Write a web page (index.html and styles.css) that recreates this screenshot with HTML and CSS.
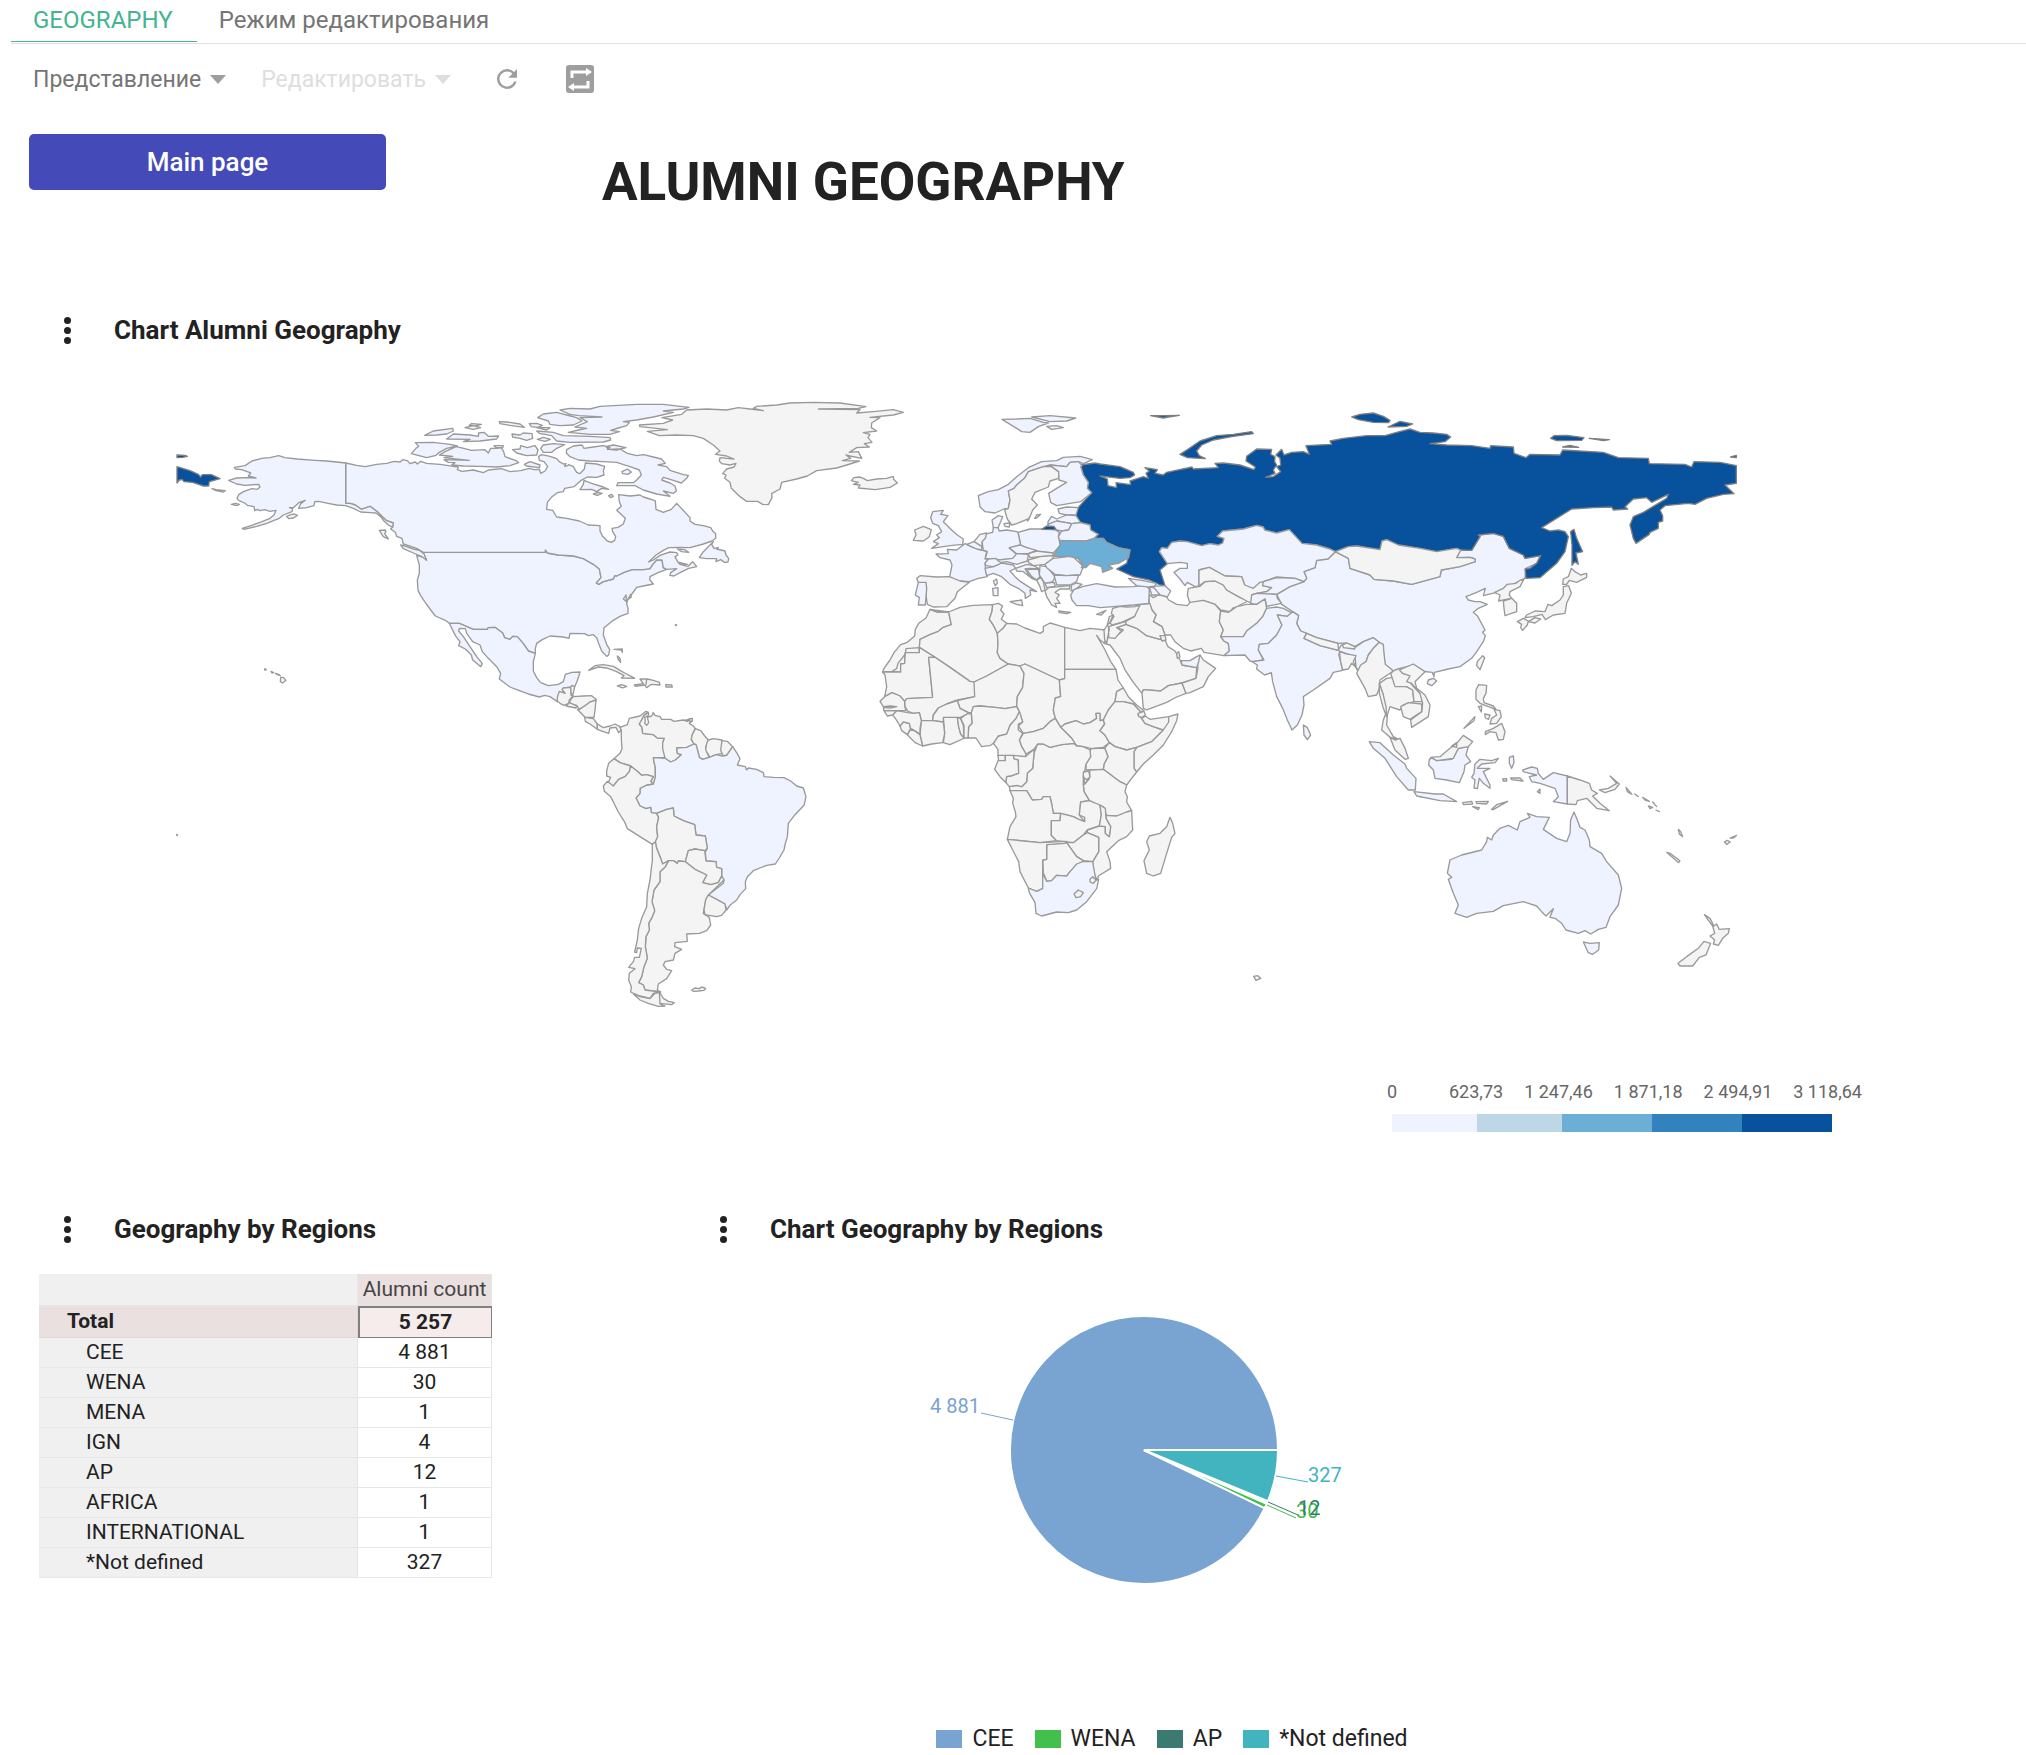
FILE: index.html
```
<!DOCTYPE html>
<html lang="ru">
<head>
    <meta charset="UTF-8">
    <meta name="viewport" content="width=device-width, initial-scale=1.0">
    <title>Alumni Geography</title>
    <link rel="stylesheet" href="styles.css">
</head>
<body>

    <nav class="tabs">
        <a class="tab active" href="#geography">GEOGRAPHY</a>
        <a class="tab" href="#edit">Режим редактирования</a>
    </nav>

    <div class="toolbar">
        <button class="tool-menu" type="button">Представление <span class="caret"></span></button>
        <button class="tool-menu" type="button" disabled>Редактировать <span class="caret"></span></button>
        <button class="tool-icon" type="button" aria-label="Обновить">
            <svg width="30" height="30" viewBox="0 0 24 24"><path d="M17.65 6.35A7.96 7.96 0 0 0 12 4a8 8 0 1 0 7.73 10h-2.08A6 6 0 1 1 12 6c1.66 0 3.14.69 4.22 1.78L13 11h7V4z"/></svg>
        </button>
        <button class="tool-icon" type="button" aria-label="Автообновление">
            <svg width="28" height="28" viewBox="0 0 28 28"><rect width="28" height="28" rx="3"/><path class="arrow-line" d="M6 13V7h15M22 16v6H7"/><path class="arrow-head" d="M20 3 26 7l-6 4zM8 18 2 22l6 4z"/></svg>
        </button>
    </div>

    <header class="page-head">
        <button class="main-btn" type="button">Main page</button>
        <h1>ALUMNI GEOGRAPHY</h1>
    </header>

    <section class="panel">
        <div class="panel-head">
            <button class="dots" type="button" aria-label="Меню"><span></span><span></span><span></span></button>
            <h2>Chart Alumni Geography</h2>
        </div>

        <div class="map-wrap">
        <svg class="map" viewBox="0 0 4686 1840" role="img" aria-label="Alumni Geography">
            <!-- North America -->
            <g transform="translate(-18 0)">
                <path class="high" d="M21,180 45,181 52,184 38,187 21,188z M21,215 60,227 85,238 92,246 97,239 124,239 150,251 118,260 116,273 100,273 86,268 68,262 42,260 36,253 28,255 21,264z"/>
                <path class="low" d="M760,472 1126,472 1126,465 1130,470 1132,474 1165,480 1210,483 1240,491 1270,508 1288,522 1293,548 1279,564 1286,568 1300,560 1330,552 1334,542 1340,543 1362,532 1386,524 1420,524 1440,521 1448,508 1460,495 1476,495 1480,518 1490,523 1464,533 1440,545 1439,554 1450,567 1420,573 1400,577 1388,594 1374,612 1370,625 1374,640 1374,655 1350,664 1330,676 1302,698 1300,720 1310,748 1319,764 1316,780 1310,784 1295,768 1284,740 1280,728 1270,719 1255,722 1244,716 1200,715 1197,730 1180,726 1140,723 1118,733 1100,745 1096,760 1096,775 1075,768 1060,746 1042,725 1028,724 1020,733 1004,728 998,714 975,697 955,698 952,703 910,703 868,685 838,685 826,676 796,663 780,642 764,620 752,602 744,586 742,555 748,535 748,510 740,482 762,487 768,494z"/>
                <path class="low" d="M527,204 560,211 586,215 620,208 650,205 672,199 690,201 698,194 712,197 720,206 736,201 742,207 752,199 770,205 810,208 850,214 865,216 862,224 876,229 910,225 940,233 955,225 995,221 1020,230 1052,227 1078,220 1092,224 1108,223 1112,235 1125,228 1133,214 1122,200 1108,196 1106,184 1115,179 1140,184 1160,191 1168,200 1180,207 1188,206 1184,214 1193,212 1196,209 1210,215 1220,232 1230,236 1243,222 1246,204 1280,207 1304,214 1300,228 1302,240 1280,247 1252,246 1232,257 1212,275 1184,280 1180,290 1162,293 1146,305 1132,322 1130,343 1148,346 1160,366 1190,370 1228,378 1255,390 1290,392 1290,408 1298,424 1312,438 1324,442 1334,436 1337,424 1328,410 1326,400 1344,397 1360,387 1366,370 1340,346 1354,334 1348,320 1346,299 1380,303 1410,300 1420,306 1440,312 1456,318 1458,343 1480,352 1504,343 1520,325 1560,368 1560,378 1575,388 1600,392 1622,398 1628,408 1637,416 1637,430 1626,438 1600,447 1560,458 1530,457 1496,458 1480,466 1458,480 1436,501 1450,495 1470,481 1500,471 1520,473 1524,480 1515,485 1524,502 1530,508 1554,514 1568,500 1580,515 1556,520 1530,533 1512,543 1500,541 1502,533 1520,521 1490,523 1480,518 1476,495 1460,495 1448,508 1440,521 1420,524 1386,524 1362,532 1340,543 1334,542 1330,552 1300,560 1286,568 1279,564 1293,548 1288,522 1270,508 1240,491 1210,483 1165,480 1132,474 1130,470 1126,465 1126,472 760,472 740,460 700,447 696,430 680,424 676,412 662,402 668,396 670,384 650,377 638,366 622,350 600,334 574,343 556,330 540,325 527,325z"/>
                <path class="low" d="M527,204 500,201 470,198 436,196 381,192 345,188 326,182 300,188 275,190 246,198 225,212 193,217 196,222 215,224 242,234 235,243 258,249 230,248 200,249 176,256 200,267 225,271 266,268 270,276 262,283 246,281 222,289 206,299 201,310 207,317 224,324 232,331 252,335 254,347 262,343 270,347 284,344 300,349 318,346 312,360 300,370 276,380 245,391 217,400 222,403 260,394 290,385 312,376 328,370 340,360 366,350 368,341 358,338 370,338 388,322 406,316 392,326 386,340 410,338 432,332 434,320 446,319 474,325 500,330 527,332 550,340 572,351 600,353 618,354 634,367 642,378 656,391 668,396 670,384 650,377 638,366 622,350 600,334 574,343 556,330 540,325 527,325z"/>
                <path class="low" d="M126,281 140,284 166,287 160,291 138,287z M350,364 362,359 374,357 382,361 370,369 356,371z M184,328 196,325 208,328 200,332z M332,847 340,847 348,856 338,864 331,860z M284,822 288,822 288,825 284,825z M303,829 311,833 306,834z M316,835 326,838 331,842 320,838z M628,406 645,405 648,409 644,416 655,432 640,425z M692,450 708,454 730,462 748,466 762,477 770,496 754,484 730,474 700,461z"/>
                <path class="low" d="M838,685 868,685 910,703 952,703 955,698 975,697 998,714 1004,728 1020,733 1028,724 1042,725 1060,746 1075,768 1096,775 1090,800 1090,828 1100,848 1112,863 1135,872 1165,868 1180,860 1186,838 1206,832 1230,831 1226,845 1220,862 1214,875 1180,879 1178,887 1186,903 1168,906 1162,920 1140,905 1124,901 1108,906 1075,897 1040,884 1020,876 988,852 992,835 980,815 955,790 937,770 930,750 908,740 890,715 886,701 868,700 866,708 880,725 900,755 920,785 937,806 932,815 920,805 908,795 904,780 886,762 866,752 870,740 856,722z"/>
                <!-- Canadian Arctic -->
                <path class="low" d="M736,143 790,142 840,148 862,153 830,160 808,172 798,181 770,188 724,176 738,160 746,154z M858,155 872,158 905,166 945,164 955,174 962,160 980,160 994,158 1001,170 1005,185 1040,198 1046,203 1020,212 980,216 930,214 880,213 845,210 855,203 835,202 822,194 898,196 822,188 848,184 808,180 825,170z M764,121 790,108 848,100 850,108 830,117 800,120z M830,132 850,117 900,120 925,124 926,114 942,112 955,124 986,123 980,132 930,138 880,140 900,133z M885,98 910,92 932,98 910,103z M898,91 905,86 934,88 915,93z M988,80 1010,81 1050,87 1063,97 1020,91 990,86z M1078,86 1100,85 1117,91 1104,97 1084,95z M1026,117 1050,120 1060,114 1086,116 1088,130 1070,136 1050,130 1028,126z M1102,133 1120,127 1141,133 1125,139z"/>
                <path class="low" d="M1028,164 1050,162 1052,152 1072,158 1095,152 1104,165 1100,180 1070,182 1040,174z M1112,160 1120,150 1150,146 1184,149 1160,160 1145,172 1120,172z M1063,208 1080,200 1110,210 1108,218 1070,213z M972,152 1000,152 998,158 978,158z M1103,68 1120,57 1160,52 1190,60 1220,68 1236,78 1210,90 1170,92 1140,88 1135,78z M1170,45 1200,40 1260,42 1290,34 1400,28 1480,28 1557,37 1540,42 1480,48 1510,52 1450,66 1400,75 1360,80 1378,82 1370,92 1345,99 1322,106 1348,110 1320,118 1260,118 1195,112 1225,105 1250,100 1215,96 1252,80 1230,68 1296,66 1226,62 1200,58z M1100,108 1150,112 1180,122 1260,124 1320,128 1322,135 1300,141 1200,142 1160,138 1145,122 1108,115z M1100,98 1140,98 1130,105z"/>
                <path class="low" d="M1190,164 1210,153 1236,150 1242,160 1270,156 1300,152 1320,157 1312,163 1350,162 1372,175 1400,182 1420,179 1450,186 1474,192 1486,205 1464,210 1490,215 1500,226 1540,239 1555,241 1550,250 1534,264 1510,256 1480,247 1475,255 1500,264 1515,273 1519,288 1510,295 1480,288 1500,304 1460,297 1420,285 1395,272 1340,272 1344,263 1390,263 1400,255 1414,240 1408,225 1380,215 1340,202 1300,200 1260,198 1225,195 1200,185 1189,174z M1308,155 1330,150 1368,158 1340,165 1316,163z M1356,230 1372,222 1384,231 1374,238 1358,236z M1242,256 1265,265 1300,276 1316,283 1295,280 1280,290 1265,283 1230,284 1240,268z M1270,297 1285,292 1296,295 1282,301z M1316,302 1324,298 1330,304 1322,308z M1630,440 1620,450 1600,470 1588,488 1610,491 1640,491 1638,500 1652,494 1664,502 1674,501 1676,490 1668,480 1665,468 1640,462 1645,458 1632,460 1625,448z M1522,462 1545,464 1556,472 1535,470z M1527,502 1540,508 1552,508z M1368,600 1370,620 1360,612z M1382,598 1384,606 1376,612z"/>
                <!-- Caribbean -->
                <path d="M1256,826 1275,812 1300,809 1330,814 1350,826 1364,834 1385,845 1394,850 1354,849 1362,842 1340,830 1310,819 1285,816z M1342,873 1355,869 1370,874 1358,879z M1393,870 1420,866 1410,852 1432,852 1450,856 1468,862 1470,870 1444,868 1430,878 1424,870 1396,874z M1430,852 1428,870 M1487,869 1505,870 1507,876 1488,876z M1332,763 1357,762 1357,772 1354,765z M1342,783 1350,790 1352,802 1344,792z M1516,689 1520,690 1517,692z"/>
            </g>
            <!-- Greenland, Iceland -->
            <g transform="translate(1062 0)">
                <path d="M470,45 530,42 590,45 625,38 660,42 700,47 670,40 680,34 740,30 780,24 850,22 930,24 1008,35 985,40 865,42 990,44 980,54 1030,50 1090,44 1120,52 1090,60 1020,67 1050,68 1025,84 1024,98 1040,108 1000,113 1020,118 1014,128 1026,142 1003,146 1018,156 980,158 958,172 985,170 995,190 960,183 948,180 962,190 937,197 988,198 960,207 920,219 860,227 832,243 800,252 755,262 750,282 725,296 726,308 715,329 698,328 683,319 650,319 630,305 604,280 600,262 584,250 588,240 578,236 590,222 612,216 618,205 600,210 575,206 568,198 570,188 612,192 590,183 557,178 570,168 550,150 520,130 490,122 440,120 388,122 352,109 412,104 330,95 328,90 400,85 428,75 396,68 455,58z"/>
                <path d="M964,257 972,248 988,246 1000,250 1012,257 1040,252 1070,250 1090,244 1091,253 1102,264 1080,277 1036,284 985,279 990,270 970,268 985,262z"/>
            </g>
            <!-- Central and South America -->
            <g transform="translate(1092 855)">
                <path d="M52,51 58,34 76,40 66,28 70,24 92,22 94,46 100,46 88,60 86,70 72,76 60,70 52,64z"/>
                <path d="M92,22 96,16 104,20 100,40 94,46z"/>
                <path d="M100,50 130,48 155,47 168,58 166,66 150,66 134,78 118,88 110,76 90,70 90,62z"/>
                <path d="M88,68 110,78 108,84 78,78z"/>
                <path d="M118,88 134,78 150,66 168,60 165,90 162,112 135,112 112,88z"/>
                <path d="M134,112 160,116 172,132 172,148 150,132 136,124z"/>
                <path d="M172,132 190,143 210,138 225,132 240,140 244,150 236,158 228,142 210,144 206,160 190,155 172,148z"/>
                <path d="M244,150 240,142 262,134 268,115 300,108 318,94 325,97 312,106 306,118 298,132 306,142 308,160 340,164 352,174 373,175 368,188 370,206 376,232 340,233 342,246 346,262 346,292 340,312 332,304 340,290 320,284 305,286 290,272 272,258 240,248 222,236 240,220 246,206 244,180z"/>
                <path d="M306,118 312,106 325,97 326,106 314,112 316,122 314,130 320,136 326,128 322,112 335,108 340,98 345,106 360,110 365,118 392,118 402,124 430,120 456,124 448,130 460,138 466,146 456,166 454,178 462,192 440,202 410,204 412,220 424,224 406,240 392,246 376,238 368,206 368,188 373,175 352,174 340,164 308,160 306,142 298,132z"/>
                <path d="M448,116 457,115 457,123 450,124z M435,122 445,118 442,124z"/>
                <path d="M466,146 482,152 494,168 505,180 502,190 497,202 502,220 508,232 488,238 478,232 472,208 468,194 462,192 454,178 456,166z"/>
                <path d="M505,180 520,176 546,180 545,210 548,220 528,224 510,232 497,210 500,190z"/>
                <path d="M546,182 562,184 578,200 560,226 548,226 542,210z"/>
                <path class="low" d="M340,312 346,292 346,262 342,246 340,233 376,235 392,246 406,240 424,224 412,220 410,204 440,202 462,192 468,194 472,208 478,232 488,238 508,232 528,224 548,228 560,226 578,200 590,218 600,236 592,255 616,260 620,270 625,264 650,268 670,278 672,290 700,292 732,293 752,303 770,318 790,324 798,350 792,376 765,404 745,430 742,470 736,490 732,510 718,534 706,552 680,556 640,572 622,590 616,606 617,626 600,644 590,660 570,676 560,690 555,672 530,658 505,645 550,610 552,600 545,588 545,566 530,562 528,545 498,543 496,516 502,505 496,468 468,465 464,434 430,422 402,408 400,384 380,388 350,400 334,398 332,382 318,386 300,378 288,354 300,340 300,325 320,315z"/>
                <path d="M222,236 240,248 272,258 268,275 255,290 236,298 220,318 204,310 212,292 200,288 200,272 206,250z"/>
                <path d="M272,258 290,272 305,286 320,284 340,290 332,304 340,312 320,315 300,325 300,340 288,354 300,378 318,386 332,382 334,398 350,400 356,412 350,440 353,470 346,486 337,493 300,470 262,446 255,428 235,396 212,350 193,334 190,318 202,304 220,318 236,298 255,290 268,275z"/>
                <path d="M350,400 380,388 400,384 402,408 430,422 464,434 468,465 496,468 502,505 494,512 465,507 445,512 436,545 415,543 412,550 400,542 386,542 368,552 360,530 350,505 346,486 353,470 350,440 356,412z"/>
                <path d="M445,512 465,507 494,512 498,543 528,545 530,562 545,566 545,588 535,608 512,614 488,608 500,585 465,568 436,545z"/>
                <path d="M386,542 400,542 412,550 415,543 436,545 465,568 500,585 488,608 512,614 535,608 545,588 552,600 505,645 497,660 490,700 508,712 512,735 500,752 478,760 440,762 442,784 405,788 404,800 425,808 405,820 400,840 375,845 370,855 380,868 395,872 380,896 355,912 352,930 362,936 315,930 310,915 296,908 305,890 312,860 322,835 316,800 318,770 328,750 326,730 336,712 344,692 336,665 342,630 360,605 360,575 376,560z"/>
                <path d="M337,493 346,486 350,505 360,530 368,552 386,542 376,560 360,575 360,605 342,630 336,665 344,692 336,712 326,730 328,750 318,770 316,800 322,835 312,860 305,890 296,908 310,915 315,930 362,936 340,940 330,955 300,948 272,936 274,920 266,900 268,880 285,866 266,862 280,845 284,832 298,832 304,805 292,804 290,818 284,816 292,780 296,745 305,715 320,680 322,640 330,600 337,540z"/>
                <path d="M358,936 370,955 385,964 403,968 395,974 360,970z M280,942 300,950 330,956 345,940 358,938 360,972 375,978 355,979 325,970 300,960z"/>
                <path d="M505,645 530,658 555,672 558,690 545,706 530,710 495,704 492,690 497,660z"/>
                <path d="M455,930 465,924 478,926 485,921 497,925 492,931 475,933 460,934z"/>
            </g>
            <!-- Africa -->
            <g transform="translate(2082 615)">
                <path d="M180,28 200,36 236,36 240,55 244,74 220,82 205,94 180,104 150,118 148,158 106,158 104,190 92,216 38,216 42,205 60,180 72,158 92,134 110,128 134,108 136,88 146,70 168,54z"/>
                <path d="M66,214 80,206 84,190 106,162 108,146 148,143 148,158 106,158 104,190 92,192 92,216 40,216z"/>
                <path d="M180,28 200,36 236,36 270,22 310,16 368,14 366,34 358,58 370,75 382,100 384,130 382,158 390,175 415,192 350,228 312,246 300,244 240,202 148,142 150,118 180,104 205,94 220,82 244,74 240,55 236,36z"/>
                <path d="M368,14 385,10 398,18 392,30 402,42 394,58 410,70 400,84 386,98 382,100 370,75 358,58 366,34z"/>
                <path d="M410,70 440,72 465,84 510,100 520,94 520,80 540,69 565,76 584,82 584,236 568,240 465,192 450,198 415,192 390,175 382,158 384,130 382,100 400,84z"/>
                <path d="M584,82 630,92 660,85 706,90 710,110 704,130 690,120 680,106 705,150 722,185 738,208 584,208z"/>
                <path d="M38,216 92,216 92,192 104,190 106,158 148,158 148,142 196,172 176,172 188,292 110,296 104,304 90,288 66,278 44,290 50,260 45,225z"/>
                <path d="M196,172 240,202 300,244 314,246 314,290 262,300 230,312 205,324 190,345 188,362 154,362 148,338 130,340 114,334 104,318 104,304 110,296 188,292 176,172z"/>
                <path d="M312,246 350,228 415,192 450,198 462,220 458,262 442,290 440,320 405,326 375,322 330,318 310,320 304,338 295,338 270,325 262,302 314,290z"/>
                <path d="M465,192 568,240 572,290 556,294 550,330 556,355 540,365 520,385 490,395 460,400 445,378 458,366 450,340 440,320 442,290 458,262 462,220 450,198z"/>
                <path d="M584,208 738,208 744,240 760,264 740,275 735,305 715,330 700,360 690,362 690,340 678,340 680,355 660,368 640,372 618,362 585,372 572,382 556,355 550,330 556,294 572,290 568,240 584,236z"/>
                <path d="M572,382 585,372 618,362 640,372 660,368 680,355 678,340 690,340 690,362 700,360 704,372 690,392 705,405 718,428 700,442 665,446 640,440 620,438 605,415z"/>
                <path d="M740,275 760,264 775,290 800,315 822,332 812,336 790,312 760,305 735,305z"/>
                <path d="M735,305 760,305 790,312 812,336 804,345 815,355 825,370 850,380 880,390 845,425 800,442 770,450 735,440 718,428 705,405 690,392 704,372 700,360 715,330z"/>
                <path d="M826,348 840,358 896,350 924,342 920,362 905,395 880,435 850,465 820,492 800,516 792,505 792,455 800,442 845,425 880,390 850,380 825,370 815,355z M896,350 896,366 880,390"/>
                <path d="M804,340 822,334 826,344 818,352 806,350z"/>
                <path d="M718,428 735,440 770,450 800,442 792,455 792,505 800,516 785,535 770,555 750,545 700,508 702,492 714,470 704,444z"/>
                <path d="M665,446 704,444 714,470 702,492 700,508 648,510 648,492 662,470 660,450z"/>
                <path d="M660,510 700,508 750,545 770,555 765,575 772,590 770,606 785,632 770,636 740,648 710,648 700,620 680,614 658,602 642,575 640,555 658,536z"/>
                <path d="M503,432 520,432 540,442 575,434 612,430 622,438 640,440 660,450 662,470 648,492 645,510 640,530 640,555 642,575 658,602 632,606 628,645 644,665 630,660 610,650 572,640 550,640 545,612 540,590 520,590 515,598 487,600 470,572 420,572 418,560 440,556 455,560 470,545 472,520 488,505 492,460z"/>
                <path d="M640,516 656,513 660,530 650,540 640,530z M640,530 650,540 658,535 645,552z"/>
                <path d="M460,400 490,395 520,385 540,365 556,355 572,382 605,415 620,438 612,430 575,434 540,442 520,432 503,432 492,448 468,462 455,440 448,420z"/>
                <path d="M440,320 450,340 458,366 445,372 445,390 458,400 448,420 455,440 468,462 466,470 384,466 384,448 370,430 385,408 410,400 420,375 438,355z"/>
                <path d="M310,320 330,318 375,322 405,326 440,320 448,335 438,355 420,375 410,402 385,408 370,430 362,436 335,440 318,414 294,414 296,380 306,370 304,338z"/>
                <path d="M220,352 262,352 266,380 272,402 284,414 240,434 220,428 224,400z"/>
                <path d="M262,352 272,356 280,376 282,414 272,402 266,380z"/>
                <path d="M272,356 290,340 304,342 306,370 296,380 294,414 282,414 282,376z"/>
                <path d="M262,302 270,325 295,338 288,344 272,352 220,352 220,366 205,364 188,362 190,345 205,324 230,312z"/>
                <path d="M154,362 188,362 220,366 224,400 218,428 185,432 158,438 150,405z"/>
                <path d="M120,390 134,392 150,405 158,438 135,428 112,404z"/>
                <path d="M90,378 100,366 118,370 122,385 112,404 95,392z"/>
                <path d="M68,345 80,332 114,338 130,340 148,338 154,362 150,385 150,402 134,392 122,385 118,370 100,366 90,378 78,358z"/>
                <path d="M42,332 80,332 68,345 52,348z"/>
                <path d="M30,304 44,290 66,278 90,288 104,304 104,318 108,332 42,332 40,320z M40,320 60,318 80,320 60,324 42,322z"/>
                <path d="M384,466 406,466 406,482 386,482z"/>
                <path d="M384,482 406,482 406,466 430,466 432,476 445,480 446,520 425,528 410,530 408,548 390,530 374,508z"/>
                <path d="M466,470 492,448 492,460 488,505 472,520 470,545 455,560 440,556 418,560 408,548 410,530 425,528 446,520 445,480 432,476 430,466z"/>
                <path d="M420,572 470,572 487,600 515,598 520,590 540,590 545,612 550,640 572,640 570,662 544,662 544,706 560,722 510,728 412,718 420,680 438,650 436,635 428,610 430,595z"/>
                <path d="M572,640 610,650 630,660 644,665 644,652 628,645 632,606 658,602 690,615 694,645 688,678 652,690 640,705 610,728 560,722 544,706 544,662 570,662z"/>
                <path d="M785,632 788,690 770,710 745,722 710,755 720,785 722,805 685,828 682,842 672,820 668,785 686,755 686,712 652,698 652,690 688,678 706,680 706,700 718,710 722,680 708,655 708,646 740,648 770,636z"/>
                <path d="M690,615 706,625 708,655 722,680 718,710 706,700 706,680 688,678 694,645z"/>
                <path d="M652,698 686,712 686,755 668,785 640,782 620,770 590,728 610,728 640,705z"/>
                <path d="M530,734 590,728 620,770 640,782 600,815 590,828 560,826 545,842 530,844 520,818 518,780 530,778z"/>
                <path d="M412,718 510,728 590,724 585,730 530,734 530,778 518,780 518,866 500,874 475,864 450,815 446,785z"/>
                <path class="low" d="M475,864 500,874 518,866 518,820 530,844 545,842 560,826 590,828 600,815 620,792 640,784 668,785 674,820 678,840 686,838 680,866 650,905 620,930 595,938 560,936 515,948 498,940 495,908 478,878z"/>
                <path d="M612,882 625,870 640,878 632,890 618,893z M660,838 668,830 678,840 670,850 660,846z"/>
                <path d="M900,652 908,670 915,700 905,712 890,760 872,820 850,828 830,820 822,782 838,750 830,725 838,708 870,700 890,680z"/>
            </g>
            <!-- Asia -->
            <g transform="translate(2772 0)">
                <path class="low" d="M706,470 745,490 750,520 810,540 822,553 880,558 935,568 1020,545 1024,525 1080,515 1126,500 1125,492 1110,487 1070,488 1082,465 1115,466 1140,425 1135,420 1180,415 1210,424 1228,460 1270,480 1275,490 1322,482 1310,505 1278,520 1275,550 1245,565 1225,575 1190,592 1150,602 1156,580 1130,592 1098,605 1105,615 1125,620 1140,620 1162,628 1135,640 1120,652 1132,662 1155,705 1148,712 1156,722 1150,740 1130,770 1115,790 1080,815 1045,822 1003,832 1002,845 997,832 960,828 940,810 895,822 880,828 855,810 850,770 840,744 820,728 790,740 765,755 740,744 716,745 650,728 620,715 602,708 590,685 596,662 578,650 545,628 530,598 570,575 612,560 620,550 612,530 645,518 650,496 684,492z M985,855 1000,850 1010,858 995,872 982,866z"/>
                <path class="high" d="M-58,210 -15,204 0,207 60,215 100,232 104,240 90,248 60,250 0,243 22,252 24,272 50,278 48,263 92,269 90,258 130,245 145,250 138,235 148,228 135,218 172,224 165,235 190,240 200,232 276,216 280,222 355,218 345,205 370,204 420,210 462,224 466,216 438,198 440,184 470,162 515,163 512,178 525,185 524,200 530,210 520,225 525,235 497,247 520,245 542,230 530,215 542,210 540,190 528,180 545,163 552,180 575,172 610,170 628,178 618,152 695,148 690,138 730,130 800,122 855,122 890,112 930,102 960,112 1000,114 1040,118 1052,126 1035,140 990,146 1040,150 1115,152 1170,160 1172,152 1240,156 1242,175 1278,188 1290,178 1380,180 1388,165 1510,172 1555,188 1645,190 1648,206 1755,208 1775,216 1782,200 1860,202 1909,212 1909,265 1875,270 1902,296 1870,298 1820,310 1785,328 1765,325 1695,332 1680,345 1688,362 1688,378 1675,382 1675,400 1650,412 1648,418 1630,430 1608,445 1600,430 1590,390 1600,365 1630,352 1700,310 1705,298 1655,322 1640,308 1600,312 1575,335 1583,342 1540,345 1535,336 1480,338 1415,342 1325,398 1350,408 1375,405 1395,410 1405,425 1395,470 1370,505 1320,548 1278,550 1275,522 1290,520 1310,505 1322,482 1275,490 1270,480 1228,460 1210,424 1180,415 1135,420 1140,425 1115,466 1082,465 1070,460 1010,470 960,460 895,450 860,434 846,438 840,464 770,453 745,455 706,470 690,462 650,450 606,445 568,404 530,414 494,405 490,396 470,391 430,402 368,408 352,424 372,430 368,444 355,450 330,446 305,452 262,440 240,438 215,442 202,460 185,458 178,470 190,488 202,506 180,525 195,572 180,570 148,555 100,545 50,522 80,505 90,465 55,458 20,442 10,430 -18,430 -5,418 -28,405 -30,390 -58,383 -72,370 -72,345 -54,325 -25,293 -38,280 -35,262 -50,240z"/>
                <path class="high" d="M1412,410 1422,403 1430,430 1448,470 1428,474 1435,508 1425,500 1416,511 1416,450z M240,178 268,160 300,138 350,122 400,118 455,110 460,116 400,124 340,135 305,150 290,168 298,182 316,191 262,188z M755,66 780,58 820,54 850,64 870,76 866,83 820,82 775,74z M864,96 900,79 938,87 920,94z M152,62 190,62 238,61 205,66 190,69z M1352,130 1362,122 1400,121 1452,128 1445,136 1370,137z M1468,130 1528,134 1510,137z M1388,156 1410,151 1436,157z M1892,186 1909,181 1909,188z"/>
                <path d="M706,470 745,455 770,453 840,464 846,438 860,434 895,450 960,460 1010,470 1070,460 1082,465 1070,488 1110,487 1125,492 1126,500 1080,515 1024,525 1020,545 935,568 880,558 822,553 810,540 750,520 745,490z"/>
                <path class="low" d="M178,470 185,458 202,460 215,442 240,438 262,440 305,452 330,446 355,450 368,444 372,430 352,424 368,408 430,402 470,391 490,396 494,405 530,414 568,404 606,445 650,450 690,462 706,470 684,492 650,496 645,518 612,530 620,550 612,560 585,550 530,546 490,560 455,585 434,570 425,545 375,543 328,517 297,525 297,573 285,575 262,562 255,572 240,552 222,532 240,520 262,520 262,505 240,502 202,506 190,488z"/>
                <path d="M265,580 300,574 315,560 345,558 370,570 380,585 420,608 445,618 420,630 410,640 400,638 390,650 362,645 345,628 310,616 270,625 262,600z"/>
                <path d="M297,573 297,525 328,517 375,543 425,545 434,570 460,580 480,562 492,560 488,572 515,578 500,590 470,595 455,600 456,625 440,618 380,585 370,570 345,558 315,560z"/>
                <path class="low" d="M490,560 530,548 585,550 612,560 570,575 530,598 470,595 500,590 515,578 488,572z"/>
                <path class="low" d="M455,600 470,595 530,598 532,610 545,625 500,634 495,612 470,628 452,625z"/>
                <path d="M146,598 160,608 178,598 196,600 206,615 230,628 262,632 270,622 310,616 345,628 362,648 358,680 370,705 362,725 372,738 385,745 388,768 372,782 312,772 304,760 272,768 250,760 225,740 212,720 195,720 192,712 186,695 160,680 168,660 156,645 148,625z"/>
                <path d="M362,648 385,652 410,635 440,628 470,628 495,612 500,640 488,665 470,685 440,708 430,725 362,725 370,705 358,680z"/>
                <path class="low" d="M500,640 530,636 550,640 578,655 562,664 532,660 546,690 530,720 505,745 478,748 475,765 490,795 460,800 450,798 435,780 372,782 388,768 385,745 372,738 362,725 430,725 440,708 470,685 488,665z"/>
                <path class="low" d="M532,660 562,664 578,650 596,662 590,685 602,708 620,715 612,730 660,752 714,766 724,750 764,758 790,740 820,728 838,742 820,760 805,780 798,800 775,830 768,815 765,785 722,770 716,778 722,800 728,826 700,832 690,850 640,885 610,905 612,930 606,960 592,990 576,1005 562,975 548,940 530,905 518,860 514,833 494,840 470,822 472,810 456,800 492,795 475,765 478,748 505,745 530,720 546,690z"/>
                <path d="M718,768 735,776 768,782 760,800 772,825 766,815 755,805 745,822 728,825 722,800z"/>
                <path d="M838,742 850,748 852,775 856,808 880,828 862,840 840,855 838,880 830,900 805,905 795,880 770,835 782,810 798,800 805,780 820,760z"/>
                <path d="M620,715 650,728 714,745 716,766 660,752 612,730z M728,750 740,744 765,755 764,762 730,758z"/>
                <path class="low" d="M610,990 622,998 632,1020 622,1034 612,1020z"/>
                <path d="M1132,800 1148,782 1154,788 1140,824 1130,812z"/>
                <!-- Arabia and the Levant -->
                <path d="M26,725 56,718 70,705 50,698 78,688 110,700 140,722 180,733 195,735 204,755 225,768 240,795 246,810 290,818 288,850 246,864 205,872 182,888 130,884 126,895 100,862 75,825 60,790 30,750 12,745z"/>
                <path d="M130,884 182,888 205,872 246,864 258,895 230,906 200,922 140,945 130,940 126,895z"/>
                <path d="M300,780 310,795 325,805 347,820 325,845 310,875 270,893 258,895 246,864 288,850 294,818 292,800z"/>
                <path class="low" d="M244,797 270,797 290,785 300,780 296,800 290,818 246,810z"/>
                <path d="M230,775 236,770 240,786 232,790z"/>
                <path d="M105,635 120,628 150,626 156,645 168,660 160,680 186,695 192,712 195,720 180,733 140,722 110,700 78,688 76,680 104,664z"/>
                <path d="M180,722 195,722 198,735 186,738z"/>
                <path d="M38,640 60,634 80,636 105,635 120,630 104,664 60,684 36,690 30,684 42,664 34,655z"/>
                <path d="M26,695 60,684 76,680 78,688 50,698 64,708 45,730 26,728z M28,665 40,660 28,685 22,690z M12,705 22,690 28,700 20,745 14,735z"/>
            </g>
            <!-- Korea, Japan -->
            <g transform="translate(3732 0)">
                <path d="M224,592 250,580 262,568 288,565 300,556 312,552 300,575 270,590 268,600 275,610 250,615 236,618 240,600z"/>
                <path d="M250,618 275,610 290,625 290,650 255,662 252,640z"/>
                <path d="M454,520 465,530 482,540 500,535 500,547 470,562 448,556 440,568 428,568 430,552 445,545z M430,575 446,572 454,595 440,625 435,655 400,660 376,674 366,658 340,665 315,668 320,660 345,648 375,650 384,628 395,632 420,615 430,600z M292,680 310,670 325,678 322,690 308,706 302,698 305,688z M325,680 345,668 362,672 345,684z"/>
            </g>
            <!-- Europe -->
            <g transform="translate(2082 0)">
                <path class="low" d="M396,73 440,72 480,70 520,82 535,84 505,95 480,112 455,110 440,100z M485,66 540,62 617,69 590,78 540,80z M530,94 560,92 580,98 545,103z"/>
                <path class="low" d="M325,302 355,290 385,284 415,268 440,245 475,218 515,200 560,197 580,187 630,184 667,194 640,206 625,200 600,202 590,215 540,210 520,215 475,230 465,248 440,270 432,280 415,288 420,315 415,340 402,342 375,354 345,350 330,335z"/>
                <path d="M415,288 432,280 440,270 465,248 475,230 520,215 545,215 566,230 566,250 540,258 535,276 495,292 485,312 502,330 488,345 478,370 440,386 425,390 412,372 404,345 415,340 420,315z M494,370 500,360 512,358 500,369z M472,378 480,364 476,374z"/>
                <path class="low" d="M540,210 590,215 600,202 625,200 636,212 632,215 640,240 655,262 652,280 665,293 632,320 600,325 560,332 542,322 536,295 560,280 590,262 567,255 566,230 545,215z"/>
                <path class="low" d="M366,375 385,362 398,365 392,380 384,398 370,398z M402,386 420,384 418,396 405,394z"/>
                <path class="low" d="M564,342 590,336 625,338 618,360 590,360 568,355z"/>
                <path class="low" d="M534,380 545,364 560,372 590,360 618,362 632,383 605,386 560,378 534,388z"/>
                <path class="low" d="M534,388 560,378 605,386 596,405 575,408 556,404 536,396z"/>
                <path class="low" d="M605,386 632,383 660,390 662,405 685,418 672,430 650,438 610,438 568,436 565,425 575,408 596,405z"/>
                <path class="low" d="M444,412 480,402 518,402 556,404 568,412 565,425 568,436 572,450 550,474 500,470 470,458 452,450z"/>
                <path class="low" d="M342,418 368,412 370,398 384,398 388,408 410,405 440,410 444,412 452,450 418,460 440,478 428,492 390,494 345,492 352,470 340,465 336,440z"/>
                <path class="low" d="M418,458 450,450 470,458 500,466 475,476 440,476z"/>
                <path class="low" d="M378,496 428,490 440,476 475,478 472,498 440,508 410,500 385,504z"/>
                <path d="M475,476 500,468 550,474 548,482 510,485 480,488z"/>
                <path d="M475,495 510,485 548,482 550,490 525,508 490,512 475,502z"/>
                <path d="M312,440 330,418 350,414 346,430 336,440 336,460 315,445z"/>
                <path class="low" d="M198,477 235,476 232,463 260,465 285,446 310,458 350,470 345,492 355,492 345,505 348,530 352,545 325,550 298,560 270,558 238,550 246,510 240,495 210,488z M370,558 380,552 382,565 376,572z"/>
                <path class="low" d="M290,448 312,440 336,455 334,465 320,462z"/>
                <path class="low" d="M345,520 370,515 395,504 430,510 437,520 420,528 435,545 452,560 475,575 500,590 480,585 482,600 466,610 465,595 445,580 420,568 395,545 370,535 350,542z M420,620 455,615 458,632 440,628z M368,580 384,578 384,602 370,602z"/>
                <path class="low" d="M345,505 355,492 378,490 385,498 395,504 370,515 348,512z"/>
                <path d="M140,550 150,542 200,546 238,545 270,558 298,562 262,590 255,610 230,635 190,636 172,628 168,600 165,570 145,562z"/>
                <path class="low" d="M145,562 168,562 170,580 166,630 145,630 148,608 136,600z"/>
                <path class="low" d="M437,520 470,508 490,512 510,522 480,520 465,522 480,545 510,560 485,550 460,530 440,528z"/>
                <path class="low" d="M470,524 505,522 510,545 500,555 485,545z"/>
                <path class="low" d="M510,512 530,515 555,545 548,560 525,565 508,540z"/>
                <path d="M500,555 512,548 520,560 525,585 515,590 510,575z"/>
                <path class="low" d="M525,565 552,562 556,574 530,578z"/>
                <path class="low" d="M550,490 600,484 625,490 640,515 630,540 590,542 555,538 530,518 525,508z M610,486 625,484 642,500 638,512z"/>
                <path class="low" d="M552,540 590,542 626,540 620,560 600,570 560,570z"/>
                <path d="M525,588 535,578 600,572 598,582 570,582 555,592 568,600 560,610 570,625 555,625 560,637 545,630 530,605z M566,648 602,652 590,656 568,653z M680,658 708,646 694,660z"/>
                <path class="mid" d="M550,484 570,450 568,436 610,438 650,438 672,430 700,430 710,442 745,458 780,465 776,488 745,505 715,510 728,520 698,532 695,515 660,505 648,518 634,518 640,508 625,490 600,484z"/>
                <path class="low" d="M605,570 620,564 636,568 620,580 603,588z M602,600 612,584 640,574 680,566 735,576 790,575 825,570 838,582 836,625 790,630 730,635 690,638 655,632 620,632 606,615z"/>
                <path class="low" d="M775,550 815,556 860,565 850,578 800,572z M838,575 885,572 902,588 892,606 870,600 845,600z M850,576 862,590 870,600"/>
                <path class="low" d="M188,350 220,346 212,358 234,362 220,380 245,405 262,420 280,432 278,448 240,452 185,460 205,446 190,440 208,428 200,420 215,410 205,392 188,385 182,368z"/>
                <path d="M134,405 160,394 184,404 178,425 160,438 130,436 138,420z"/>
                <path class="high" d="M515,403 530,393 552,394 558,404z"/>
            </g>
            <!-- South-East Asia and Oceania -->
            <g transform="translate(3492 735)">
                <path d="M118,130 140,115 160,112 165,135 200,140 218,150 222,185 190,195 180,210 150,200 142,225 140,255 160,290 175,298 150,292 125,270 130,240 138,220 125,180 130,165z"/>
                <path d="M118,130 130,165 138,200 140,230 130,205 118,160z"/>
                <path d="M152,100 165,90 180,85 188,100 210,105 208,125 225,145 245,165 245,185 222,185 218,150 200,140 165,140z"/>
                <path d="M178,90 220,72 255,95 225,125 230,145 255,165 270,195 265,230 215,262 212,240 245,215 248,190 240,160 215,130 200,125 210,108 188,100z"/>
                <path d="M182,200 205,188 245,192 245,215 210,238 190,230z"/>
                <path d="M150,292 165,300 180,295 195,325 205,355 195,358 165,330z"/>
                <path class="low" d="M88,305 120,308 160,345 195,372 200,385 228,415 226,450 205,450 170,410 135,355 100,325z M222,455 285,462 310,462 350,485 300,482 230,468z M368,488 395,484 398,492 370,494z M408,485 445,484 440,492 410,490z M398,500 418,503 415,509z M455,508 470,494 503,484 475,500 460,509z"/>
                <path class="low" d="M268,358 278,352 290,362 335,358 355,325 385,320 378,345 392,365 375,375 372,395 358,428 320,420 285,415 280,390 266,375z"/>
                <path d="M272,352 300,350 330,325 350,310 370,286 398,305 385,320 355,325 340,355 290,362z M335,318 350,308 350,322z"/>
                <path class="low" d="M402,400 405,372 420,358 455,362 475,355 465,368 425,372 412,385 450,385 430,395 450,435 450,445 430,430 418,415 412,446 402,444 405,420 395,412z M508,352 520,348 522,368 515,385 508,370z M512,414 540,414 549,423 515,419z M488,417 500,416 500,423 490,423z M592,455 600,447 600,460z"/>
                <path class="low" d="M548,390 575,381 592,385 595,400 610,418 640,398 682,408 682,492 640,485 655,470 645,445 600,430 575,425 568,410 590,405 550,395z"/>
                <path d="M682,408 720,420 748,430 755,450 772,460 758,468 780,490 808,512 770,505 740,475 712,482 708,494 682,492z M778,450 805,445 830,430 810,408 838,432 825,448 795,458z M858,442 876,463 862,455z M884,462 895,470z M908,472 928,484 915,480z M938,486 950,500z M925,498 938,502 930,506z M948,510 958,515z"/>
                <path d="M408,150 416,134 440,136 438,160 430,175 432,188 460,198 468,208 445,200 420,190 408,178z M415,200 425,198 424,216z M434,222 450,225 446,238 436,234z M455,235 470,225 462,208 480,212 484,230 470,250 450,252z M436,275 460,265 485,250 495,275 490,298 475,300 468,278 450,275 436,284z M372,265 405,230 402,242z"/>
                <path class="low" d="M330,660 365,645 425,630 440,605 442,592 455,600 460,585 480,565 505,556 532,570 540,545 570,532 562,520 590,530 628,532 610,568 650,595 680,605 690,580 692,540 702,516 712,540 720,562 735,570 748,600 750,620 785,640 800,665 835,705 845,745 835,795 810,830 798,862 775,868 752,882 735,872 715,880 678,870 665,850 645,835 630,832 640,806 618,828 605,815 590,798 550,785 490,797 460,814 410,820 380,832 345,820 355,795 340,760 325,718 335,712 322,700z M730,906 750,910 778,908 776,930 758,943 745,938z"/>
                <path d="M1093,824 1110,835 1122,858 1130,852 1138,868 1168,866 1165,880 1148,895 1135,916 1120,912 1124,900 1110,888 1124,880 1118,858z M1092,904 1112,910 1098,945 1078,952 1058,978 1020,978 1014,970 1040,950 1075,925z M980,637 990,640 1020,662 1016,668z M1015,568 1022,575 1028,590 1018,582z M1153,606 1162,601 1171,606 1160,613z M1170,594 1190,586 1180,594z"/>
            </g>
            <path d="M3233,1744 3245,1742 3254,1750 3240,1756z M2,1318 5,1320 3,1322z"/>
        </svg>
        </div>

        <div class="scale">
            <ol class="scale-labels">
                <li>0</li><li>623,73</li><li>1 247,46</li><li>1 871,18</li><li>2 494,91</li><li>3 118,64</li>
            </ol>
            <div class="scale-bar">
                <span class="step-1"></span><span class="step-2"></span><span class="step-3"></span><span class="step-4"></span><span class="step-5"></span>
            </div>
        </div>
    </section>

    <div class="row">
        <section class="panel panel-table">
            <div class="panel-head">
                <button class="dots" type="button" aria-label="Меню"><span></span><span></span><span></span></button>
                <h2>Geography by Regions</h2>
            </div>
            <table class="regions">
                <thead>
                    <tr><td></td><th scope="col">Alumni count</th></tr>
                </thead>
                <tbody>
                    <tr class="total"><th scope="row">Total</th><td>5 257</td></tr>
                    <tr><th scope="row">CEE</th><td>4 881</td></tr>
                    <tr><th scope="row">WENA</th><td>30</td></tr>
                    <tr><th scope="row">MENA</th><td>1</td></tr>
                    <tr><th scope="row">IGN</th><td>4</td></tr>
                    <tr><th scope="row">AP</th><td>12</td></tr>
                    <tr><th scope="row">AFRICA</th><td>1</td></tr>
                    <tr><th scope="row">INTERNATIONAL</th><td>1</td></tr>
                    <tr><th scope="row">*Not defined</th><td>327</td></tr>
                </tbody>
            </table>
        </section>

        <section class="panel panel-pie">
            <div class="panel-head">
                <button class="dots" type="button" aria-label="Меню"><span></span><span></span><span></span></button>
                <h2>Chart Geography by Regions</h2>
            </div>
            <svg class="pie" width="520" height="320" viewBox="0 0 520 320" role="img" aria-label="Geography by Regions">
                <g class="slices">
                    <path class="cee" d="M232 162L352.7 220.2A134 134 0 1 1 366 162z"/>
                    <path class="ap" d="M232 162L355.8 213.4A134 134 0 0 1 355 215.1z"/>
                    <path class="wena" d="M232 162L354.7 215.9A134 134 0 0 1 352.7 220.2z"/>
                    <path class="none" d="M232 162L366 162A134 134 0 0 1 355.9 213.1z"/>
                </g>
                <g class="leads">
                    <path class="cee" d="M69 125 101 132"/>
                    <path class="wena" d="M355 217 384 230"/>
                    <path class="ap" d="M356 214 386 227"/>
                    <path class="none" d="M364 188 396 194"/>
                </g>
                <text class="cee" x="68" y="125" text-anchor="end">4 881</text>
                <text class="wena" x="384" y="230">30</text>
                <text class="ap" x="386" y="227">12</text>
                <text class="none" x="396" y="194">327</text>
            </svg>
            <ul class="pie-legend">
                <li class="cee">CEE</li>
                <li class="wena">WENA</li>
                <li class="ap">AP</li>
                <li class="none">*Not defined</li>
            </ul>
        </section>
    </div>

</body>
</html>
```
FILE: styles.css
```
:root {
    --accent: #42b590;
    --button: #444ab8;
    --text: #222222;
    --muted: #757575;
    --line: #e6e6e6;
    --cee: #79a3d1;
    --wena: #41c04c;
    --ap: #3b7a70;
    --none: #42b4bf;
}

* {
    box-sizing: border-box;
}

body {
    margin: 0;
    font-family: Roboto, "Liberation Sans", sans-serif;
    color: var(--text);
    background: #ffffff;
}

button {
    border: none;
    background: none;
    padding: 0;
    font-family: inherit;
    cursor: pointer;
}

h1, h2, ul, ol {
    margin: 0;
    padding: 0;
    list-style: none;
}

/* Tabs */
.tabs {
    display: flex;
    margin-left: 11px;
    height: 44px;
    border-bottom: 1px solid #e0e0e0;
}

.tab {
    height: 42px;
    padding: 0 24px 0 22px;
    line-height: 40px;
    font-size: 24px;
    color: var(--muted);
    text-decoration: none;
}

.tab.active {
    color: var(--accent);
    border-bottom: 1px solid var(--accent);
}

/* Toolbar */
.toolbar {
    display: flex;
    align-items: center;
    gap: 35px;
    height: 70px;
    padding-left: 33px;
}

.tool-menu {
    display: flex;
    align-items: center;
    gap: 9px;
    font-size: 23px;
    color: var(--muted);
}

.tool-menu:disabled {
    color: #dedede;
}

.caret {
    border: 8px solid transparent;
    border-top: 9px solid #9e9e9e;
    border-bottom: none;
}

.tool-menu:disabled .caret {
    border-top-color: #dedede;
}

.tool-icon {
    display: flex;
    margin-left: 3px;
    padding: 0 3px;
}

.tool-icon svg {
    fill: #9e9e9e;
}

.tool-icon .arrow-line {
    fill: none;
    stroke: #ffffff;
    stroke-width: 3;
}

.tool-icon .arrow-head {
    fill: #ffffff;
}

/* Page header */
.page-head {
    display: flex;
    align-items: flex-start;
    gap: 216px;
    padding: 20px 29px 0;
}

.main-btn {
    width: 357px;
    height: 56px;
    border-radius: 5px;
    background: var(--button);
    color: #ffffff;
    font-size: 26px;
    font-weight: 500;
}

h1 {
    padding-top: 16px;
    font-size: 53px;
    line-height: 64px;
    font-weight: 700;
}

/* Panels */
.panel {
    padding: 96px 39px 0;
}

.panel-head {
    display: flex;
    align-items: center;
    gap: 42px;
    height: 40px;
    padding-left: 23px;
}

.dots {
    display: flex;
    flex-direction: column;
    align-items: center;
    gap: 3px;
    width: 10px;
}

.dots span {
    width: 7px;
    height: 7px;
    border-radius: 50%;
    background: var(--text);
}

h2 {
    font-size: 26px;
    line-height: 32px;
    font-weight: 700;
}

/* Map */
.map-wrap {
    padding: 45px 249px 0 137px;
}

.map {
    display: block;
    width: 100%;
}

.map path {
    fill: #f4f4f4;
    stroke: #999999;
    stroke-width: 4;
    stroke-linejoin: round;
}

.map .low {
    fill: #eff3ff;
}

.map .mid {
    fill: #6baed6;
}

.map .high {
    fill: #08519c;
    stroke: #7f7f7f;
}

/* Colour scale under the map */
.scale {
    width: 480px;
    margin: 70px 120px 0 auto;
}

.scale-labels {
    display: flex;
    gap: 21px;
    font-size: 18px;
    line-height: 28px;
    color: #666666;
    white-space: nowrap;
}

.scale-labels li:first-child {
    min-width: 41px;
}

.scale-bar {
    display: flex;
    width: 440px;
    height: 18px;
    margin: 8px 0 0 5px;
}

.scale-bar span {
    flex: 90;
}

.scale-bar .step-1, .scale-bar .step-2 {
    flex: 85;
}

.step-1 { background: #eff3ff; }
.step-2 { background: #bdd7e7; }
.step-3 { background: #6baed6; }
.step-4 { background: #3182bd; }
.step-5 { background: #08519c; }

/* Bottom row */
.row {
    display: flex;
    padding-top: 77px;
}

.row .panel {
    padding: 0;
}

.row .panel-table {
    width: 656px;
    padding-left: 39px;
}

.panel-pie {
    width: 954px;
    margin-left: 39px;
}

.regions {
    width: 453px;
    margin-top: 25px;
    border-collapse: separate;
    border-spacing: 0;
    font-size: 21px;
    line-height: 29px;
}

.regions th, .regions td {
    padding: 0;
    font-weight: 400;
    text-align: center;
    border-bottom: 1px solid var(--line);
    border-right: 1px solid var(--line);
}

.regions tbody th, .regions thead td {
    width: 319px;
    text-align: left;
    background: #f0f0f0;
}

.regions tbody th {
    padding-left: 47px;
}

.regions thead th {
    height: 32px;
    color: #444444;
    background: #ebe0e0;
}

.regions .total th {
    padding-left: 28px;
    background: #ebe0e0;
    border-color: #e3d6d6;
    font-weight: 700;
}

.regions .total td {
    background: #f7ecec;
    border: 1px solid #808080;
    border-width: 2px 1px 1px 2px;
    font-weight: 700;
}

/* Pie */
.pie {
    display: block;
    margin: 39px auto 0;
}

.cee { fill: var(--cee); stroke: var(--cee); }
.wena { fill: var(--wena); stroke: var(--wena); }
.ap { fill: var(--ap); stroke: var(--ap); }
.none { fill: var(--none); stroke: var(--none); }

.pie text {
    font-size: 20px;
    stroke: none;
}

.slices path {
    stroke: #ffffff;
    stroke-width: 2;
}

.pie-legend {
    display: flex;
    justify-content: center;
    gap: 21px;
    margin-top: 117px;
    font-size: 23px;
    line-height: 28px;
}

.pie-legend li {
    display: flex;
    align-items: center;
    gap: 10px;
}

.pie-legend li::before {
    content: "";
    width: 26px;
    height: 18px;
    background: var(--cee);
}

.pie-legend .wena::before { background: var(--wena); }
.pie-legend .ap::before { background: var(--ap); }
.pie-legend .none::before { background: var(--none); }
```
